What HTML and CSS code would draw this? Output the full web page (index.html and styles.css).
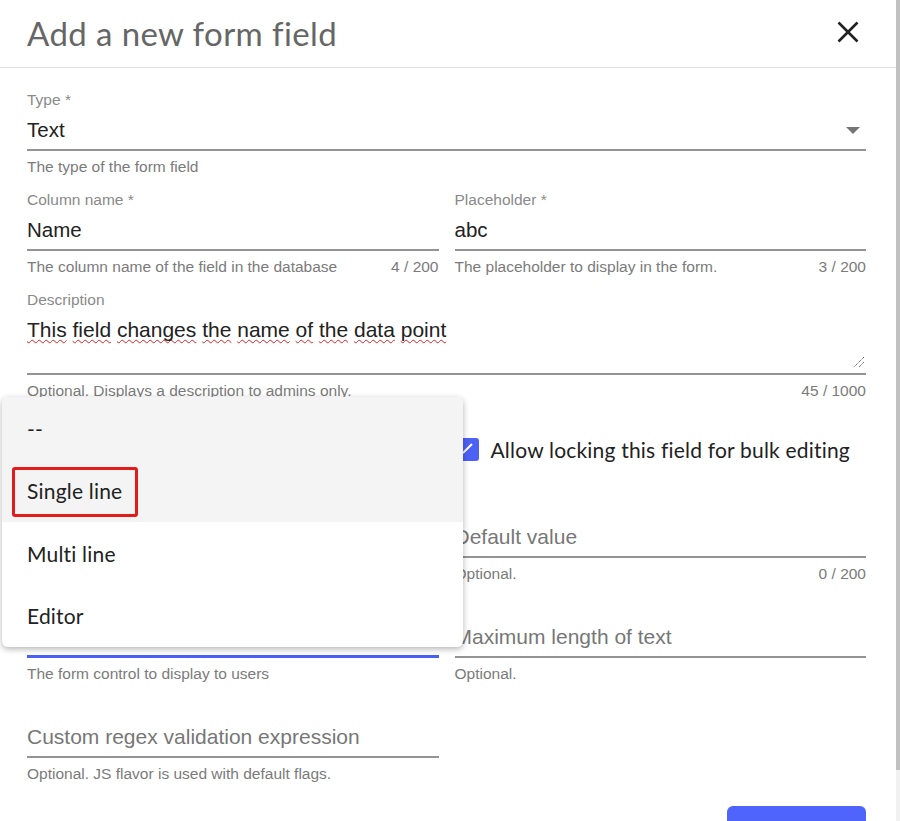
FILE: index.html
```html
<!DOCTYPE html>
<html lang="en">
<head>
<meta charset="utf-8">
<title>Add a new form field</title>
<link rel="stylesheet" href="styles.css">
</head>
<body>
<div class="window">
  <div class="dialog">
    <header class="dialog-header">
      <h1 class="dialog-title">Add a new form field</h1>
      <button class="close-btn" aria-label="Close">
        <svg width="22" height="22" viewBox="0 0 22 22"><path d="M1.5 1.5 L20.5 20.5 M20.5 1.5 L1.5 20.5" stroke="#222" stroke-width="2.6" fill="none"/></svg>
      </button>
    </header>

    <div class="dialog-body">
      <div class="field">
        <div class="label">Type *</div>
        <div class="control">
          <span>Text</span>
          <svg class="caret" width="14" height="7" viewBox="0 0 14 7"><path d="M0 0 L14 0 L7 7 Z" fill="#757575"/></svg>
        </div>
        <div class="hint"><span>The type of the form field</span></div>
      </div>

      <div class="grid">
        <div class="field">
          <div class="label">Column name *</div>
          <div class="control"><span>Name</span></div>
          <div class="hint"><span>The column name of the field in the database</span><span>4 / 200</span></div>
        </div>
        <div class="field">
          <div class="label">Placeholder *</div>
          <div class="control"><span>abc</span></div>
          <div class="hint"><span>The placeholder to display in the form.</span><span>3 / 200</span></div>
        </div>
      </div>

      <div class="field">
        <div class="label">Description</div>
        <div class="control textarea">
          <div class="text"><span class="sp">This</span> <span class="sp">field</span> <span class="sp">changes</span> <span class="sp">the</span> <span class="sp">name</span> <span class="sp">of</span> <span class="sp">the</span> <span class="sp">data</span> <span class="sp">point</span></div>
          <svg class="resize" width="12" height="12" viewBox="0 0 12 12"><path d="M11 1 L1 11 M11 6 L6 11" stroke="#555" stroke-width="1" stroke-dasharray="1.2 0.8" fill="none"/></svg>
        </div>
        <div class="hint"><span>Optional. Displays a description to admins only.</span><span>45 / 1000</span></div>
      </div>

      <div class="grid checks">
        <div class="check"><span class="box"></span></div>
        <label class="check"><span class="box checked"><svg width="22" height="22" viewBox="0 0 22 22"><path d="M7 15 L16 6" stroke="#fff" stroke-width="2" fill="none"/></svg></span><span class="check-label">Allow locking this field for bulk editing</span></label>
      </div>

      <div class="grid">
        <div class="field">
          <div class="label"></div>
          <div class="control placeholder"><span></span></div>
          <div class="hint"><span></span></div>
        </div>
        <div class="field">
          <div class="label"></div>
          <div class="control placeholder"><span>Default value</span></div>
          <div class="hint"><span>Optional.</span><span>0 / 200</span></div>
        </div>
      </div>

      <div class="grid">
        <div class="field">
          <div class="label"></div>
          <div class="control focused"><span></span></div>
          <div class="hint"><span>The form control to display to users</span></div>
        </div>
        <div class="field">
          <div class="label"></div>
          <div class="control placeholder"><span>Maximum length of text</span></div>
          <div class="hint"><span>Optional.</span></div>
        </div>
      </div>

      <div class="grid">
        <div class="field">
          <div class="label"></div>
          <div class="control placeholder"><span>Custom regex validation expression</span></div>
          <div class="hint"><span>Optional. JS flavor is used with default flags.</span></div>
        </div>
        <div></div>
      </div>

      <div class="actions">
        <button class="primary-btn">Save</button>
      </div>
    </div>

    <div class="menu">
      <div class="menu-item active">--</div>
      <div class="menu-item active">Single line<span class="annotation"></span></div>
      <div class="menu-item">Multi line</div>
      <div class="menu-item">Editor</div>
    </div>
  </div>
  <div class="scrollbar"><div class="thumb"></div></div>
</div>
</body>
</html>
```

FILE: styles.css
```css
* { box-sizing: border-box; }

html, body {
  margin: 0;
  padding: 0;
  background: #fff;
  height: 821px;
  overflow: hidden;
}

.window {
  display: flex;
  width: 900px;
  height: 821px;
}

.dialog {
  position: relative;
  flex: 1;
  min-width: 0;
  overflow: hidden;
}

.dialog-header {
  height: 68px;
  border-bottom: 1px solid #e0e0e0;
  display: flex;
  align-items: center;
  justify-content: space-between;
  padding: 0 27px 0 27px;
}

.dialog-title {
  margin: 0;
  font-family: Lato, "Open Sans", sans-serif;
  font-weight: 400;
  font-size: 33px;
  letter-spacing: 0.4px;
  color: #666;
  padding-bottom: 2px;
}

.close-btn {
  border: 0;
  background: none;
  padding: 0;
  width: 22px;
  height: 22px;
  margin-right: 10px;
  margin-bottom: 3px;
  display: flex;
}

.dialog-body {
  padding: 24px 30px 0 27px;
}

.field {
  display: flex;
  flex-direction: column;
}

.dialog-body > .field + .grid,
.dialog-body > .grid + .field,
.dialog-body > .grid + .grid {
  margin-top: 17px;
}

.label {
  height: 16px;
  font: 15.5px/16px "Liberation Sans", Arial, sans-serif;
  color: #8a8a8a;
}

.control {
  margin-top: 8px;
  height: 35px;
  font: 20.5px/28px "Liberation Sans", Arial, sans-serif;
  color: #222;
  padding-bottom: 5px;
  border-bottom: 2px solid #949494;
  display: flex;
  justify-content: space-between;
  align-items: center;
}

.control.placeholder { color: #777; font-size: 21px; }
.control.focused { border-bottom: 3px solid #4a5ff7; }

.caret { margin-right: 6px; }

.control.textarea {
  height: 59px;
  padding-bottom: 1px;
  align-items: stretch;
  font-size: 21px;
}

.sp {
  text-decoration: underline wavy #e02020;
  text-decoration-thickness: 1px;
  text-underline-offset: 2px;
  text-decoration-skip-ink: none;
}

.resize {
  align-self: flex-end;
  margin-bottom: 4px;
  margin-right: 1px;
}

.hint {
  margin-top: 8px;
  height: 16px;
  font: 15.5px/16px "Liberation Sans", Arial, sans-serif;
  color: #7b7b7b;
  display: flex;
  justify-content: space-between;
}

.grid {
  display: grid;
  grid-template-columns: 1fr 1fr;
  column-gap: 16px;
}

.dialog-body > .grid.checks {
  margin-top: 36px;
  margin-bottom: 36px;
}

.check {
  display: flex;
  align-items: center;
  gap: 12px;
  height: 28px;
}

.box {
  width: 23px;
  height: 23px;
  border-radius: 3px;
  border: 2px solid #888;
  flex: none;
  margin-left: 1px;
  display: flex;
}

.box.checked {
  background: #4d62f5;
  border: 0;
}

.check-label {
  font-family: Lato, "Open Sans", sans-serif;
  font-size: 21px;
  color: #222;
  letter-spacing: 0.2px;
}

.actions {
  margin-top: 24px;
  display: flex;
  justify-content: flex-end;
}

.primary-btn {
  width: 139px;
  height: 64px;
  border: 0;
  border-radius: 6px;
  background: #4f64fb;
  color: #fff;
  font: 16px "Liberation Sans", Arial, sans-serif;
}

.menu {
  position: absolute;
  top: 397px;
  left: 2px;
  width: 461px;
  background: #fff;
  border-radius: 6px;
  box-shadow: 0 2px 6px rgba(0, 0, 0, 0.3);
  overflow: hidden;
}

.menu-item {
  position: relative;
  height: 62.5px;
  display: flex;
  align-items: center;
  padding-left: 25px;
  font-family: Lato, "Open Sans", sans-serif;
  font-size: 21px;
  color: #222;
  letter-spacing: 0.2px;
}

.menu-item.active { background: #f4f4f4; }

.annotation {
  position: absolute;
  left: 10px;
  top: 7.5px;
  width: 126px;
  height: 50px;
  border: 3px solid #e31b1b;
  border-radius: 3px;
}

.scrollbar {
  width: 4px;
  flex: none;
  background: #f1f1f1;
}

.thumb {
  height: 770px;
  background: #c1c1c1;
}
```
